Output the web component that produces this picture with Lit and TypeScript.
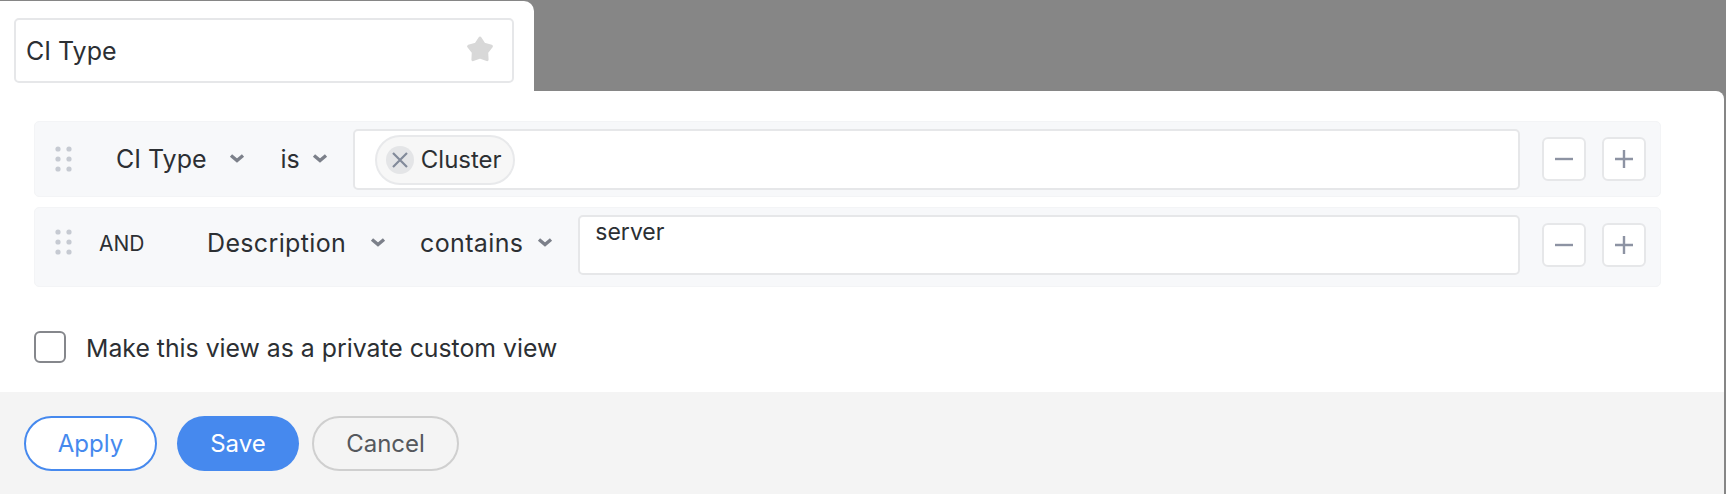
import { css, html, LitElement, svg } from "lit";
import { customElement } from "lit/decorators.js";

const chevron = html`<svg class="chev" width="18" height="12" viewBox="0 0 18 12">
    <path d="M3 2.5 L9 7.5 L15 2.5" fill="none" stroke="#7c808a" stroke-width="3.4"/>
</svg>`;

const grip = html`<svg class="grip" width="18" height="26" viewBox="0 0 18 26">
    ${[3, 13, 23].map(y => [3, 14].map(x => svg`<circle cx=${x} cy=${y} r="2.6" fill="#c6cad2"/>`))}
</svg>`;

const minus = html`<button class="sq"><svg width="20" height="20" viewBox="0 0 20 20">
    <path d="M1 10 H19" stroke="#8d93a3" stroke-width="2.4"/>
</svg></button>`;

const plus = html`<button class="sq"><svg width="20" height="20" viewBox="0 0 20 20">
    <path d="M1 10 H19 M10 1 V19" stroke="#8d93a3" stroke-width="2.4"/>
</svg></button>`;

@customElement("app-root")
export class AppRoot extends LitElement {
    render() {
        return html`
            <div class="tab">
                <div class="name">
                    <span>CI Type</span>
                    <svg width="30" height="30" viewBox="0 0 30 30">
                        <path d="M15 3 L19.1 9.3 L26.4 11.3 L21.7 17.2 L22.1 24.7 L15 22 L7.9 24.7 L8.3 17.2 L3.6 11.3 L10.9 9.3 Z" fill="#d8d8d8" stroke="#d8d8d8" stroke-width="3" stroke-linejoin="round"/>
                    </svg>
                </div>
            </div>
            <div class="panel">
                <div class="body">
                    <div class="row first">
                        ${grip}
                        <span class="field f1">CI Type</span>${chevron}
                        <span class="field op1">is</span>${chevron}
                        <div class="value v1">
                            <div class="chip">
                                <span class="x">
                                    <svg width="18" height="18" viewBox="0 0 18 18">
                                        <path d="M2 2 L16 16 M16 2 L2 16" stroke="#828a9a" stroke-width="2.2"/>
                                    </svg>
                                </span>
                                Cluster
                            </div>
                        </div>
                        ${minus}${plus}
                    </div>
                    <div class="row second">
                        ${grip}
                        <span class="and">AND</span>
                        <span class="field f2">Description</span>${chevron}
                        <span class="field op2">contains</span>${chevron}
                        <div class="value v2">server</div>
                        ${minus}${plus}
                    </div>
                    <label class="check">
                        <span class="box"></span>
                        <span class="check-text">Make this view as a private custom view</span>
                    </label>
                </div>
                <div class="footer">
                    <button class="btn apply">Apply</button>
                    <button class="btn save">Save</button>
                    <button class="btn cancel">Cancel</button>
                </div>
            </div>
        `;
    }

    static styles = css`
      :host {
        display: flex;
        flex-direction: column;
        height: 494px;
        box-sizing: border-box;
        padding: 1px 2px 0 0;
        background: #868686;
        font-family: Inter, "Liberation Sans", sans-serif;
        color: #2c2f33;
        overflow: hidden;
      }

      .tab {
        width: 534px;
        height: 90px;
        box-sizing: border-box;
        padding: 17px 20px 0 14px;
        background: white;
        border-radius: 0 10px 0 0;
      }

      .name {
        height: 65px;
        box-sizing: border-box;
        display: flex;
        align-items: center;
        justify-content: space-between;
        padding: 0 17px 0 10px;
        border: 2px solid #e6e7e9;
        border-radius: 5px;
        font-size: 25px;
      }

      .name svg {
        margin-top: -2px;
      }

      .panel {
        flex: 1;
        display: flex;
        flex-direction: column;
        background: white;
        border-radius: 0 8px 0 0;
      }

      .body {
        flex: 1;
        padding: 30px 0 0 34px;
      }

      .row {
        width: 1627px;
        box-sizing: border-box;
        display: flex;
        align-items: center;
        background: #f7f8fa;
        border: 1px solid #f3f4f6;
        border-radius: 5px;
        padding: 0 14px 0 20px;
        font-size: 25px;
      }

      .first {
        height: 76px;
        margin-bottom: 10px;
      }

      .second {
        height: 80px;
      }

      .grip,
      .chev {
        flex: none;
      }

      .f1 {
        margin-left: 43px;
      }

      .f1 + .chev {
        margin-left: 21px;
      }

      .op1 {
        margin-left: 35px;
      }

      .op1 + .chev {
        margin-left: 11px;
      }

      .second .grip {
        margin-top: -10px;
      }

      .second .chev,
      .second .and,
      .second .field {
        margin-top: -8px;
      }

      .field {
        white-space: nowrap;
      }

      .and {
        font-size: 21px;
        width: 108px;
        margin-left: 26px;
      }

      .f2,
      .op2 {
        letter-spacing: 0.35px;
      }

      .f2 + .chev {
        margin-left: 23px;
      }

      .op2 {
        margin-left: 33px;
      }

      .op2 + .chev {
        margin-left: 13px;
      }

      .value {
        flex: 1;
        background: white;
        border: 2px solid #e6e7e9;
        border-radius: 5px;
        box-sizing: border-box;
      }

      .v1 {
        height: 61px;
        margin-left: 24px;
        padding: 4px 0 0 20px;
      }

      .v2 {
        height: 60px;
        margin-left: 24px;
        margin-top: -4px;
        padding: 2px 0 0 15px;
        font-size: 23px;
        line-height: 26px;
      }

      .chip {
        display: inline-flex;
        align-items: center;
        gap: 7px;
        height: 50px;
        box-sizing: border-box;
        padding: 0 11px 0 9px;
        background: #f7f7f7;
        border: 2px solid #e8e9eb;
        border-radius: 25px;
        font-size: 24px;
      }

      .x {
        width: 28px;
        height: 28px;
        display: flex;
        align-items: center;
        justify-content: center;
        background: #e4e5e7;
        border-radius: 50%;
      }

      .sq {
        flex: none;
        width: 44px;
        height: 44px;
        margin-left: 16px;
        padding: 0;
        display: flex;
        align-items: center;
        justify-content: center;
        background: white;
        border: 2px solid #e6e7e9;
        border-radius: 6px;
      }

      .value + .sq {
        margin-left: 22px;
      }

      .second .sq {
        margin-top: -4px;
      }

      .check {
        display: flex;
        align-items: center;
        gap: 20px;
        margin-top: 43px;
        font-size: 24.8px;
      }

      .check-text {
        padding-top: 3px;
      }

      .box {
        width: 32px;
        height: 32px;
        box-sizing: border-box;
        border: 2px solid #85878c;
        border-radius: 6px;
      }

      .footer {
        height: 102px;
        box-sizing: border-box;
        display: flex;
        align-items: flex-start;
        padding: 24px 0 0 24px;
        background: #f4f4f4;
      }

      .btn {
        height: 55px;
        border-radius: 28px;
        font-family: inherit;
        font-size: 24px;
        padding: 0;
      }

      .apply {
        width: 133px;
        margin-right: 20px;
        background: white;
        border: 2px solid #4689ee;
        color: #4689ee;
      }

      .save {
        width: 122px;
        margin-right: 13px;
        background: #4689ee;
        border: none;
        color: white;
      }

      .cancel {
        width: 147px;
        background: transparent;
        border: 2px solid #cfcfcf;
        color: #55585d;
      }
    `
}
